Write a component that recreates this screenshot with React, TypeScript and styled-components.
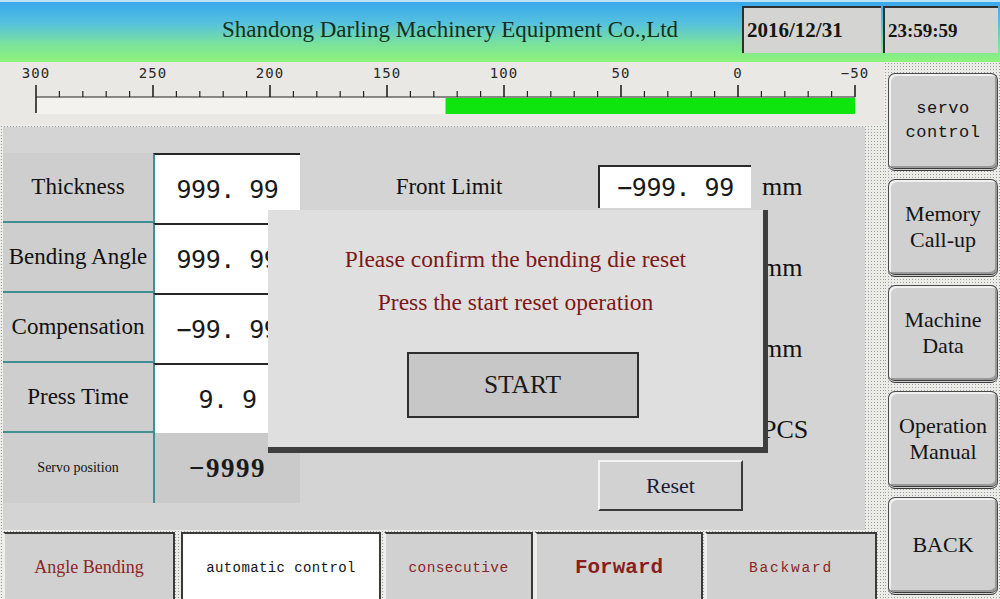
import React from "react";
import styled, { createGlobalStyle } from "styled-components";

const GlobalStyle = createGlobalStyle`
  html, body {
    margin: 0;
    padding: 0;
  }
  body {
    width: 1000px;
    height: 599px;
    overflow: hidden;
    background: #d3d3d3;
    font-family: "Liberation Serif", "Times New Roman", serif;
  }
`;

const SERIF = `"Liberation Serif", "Times New Roman", serif`;
const MONO = `"Liberation Mono", "Courier New", monospace`;
const DIGITS = `"DejaVu Sans Mono", "Liberation Mono", monospace`;

const dotted = `
  background-color: #ebebe8;
  background-image: radial-gradient(#9c9c9c 0.75px, transparent 0.9px);
  background-size: 3px 3px;
`;

const Screen = styled.div`
  width: 1000px;
  height: 599px;
  display: grid;
  grid-template-rows: 62px 537px;
  grid-template-columns: 884px 116px;
  overflow: hidden;
`;

const Header = styled.header`
  grid-column: 1 / 3;
  display: flex;
  align-items: flex-start;
  border-top: 2px solid #bfe3f6;
  background: linear-gradient(to bottom, #3aa8ec 0%, #55c1de 35%, #7ae29c 70%, #8ef47a 100%);
`;

const Title = styled.h1`
  flex: 0 0 742px;
  margin: 0;
  padding: 15px 0 0 222px;
  box-sizing: border-box;
  font-family: ${SERIF};
  font-weight: normal;
  font-size: 23px;
  color: #14301a;
  white-space: nowrap;
`;

const ClockBox = styled.div<{ $w: number; $size: number }>`
  width: ${(p) => p.$w}px;
  height: 47px;
  margin: 4px 2px 0 0;
  box-sizing: border-box;
  border-top: 2px solid #2f2f2f;
  border-left: 2px solid #2f2f2f;
  background: #d4d4d2;
  display: flex;
  align-items: center;
  padding-left: 3px;
  font-family: ${SERIF};
  font-weight: bold;
  font-size: ${(p) => p.$size}px;
  color: #151515;
`;

const LeftColumn = styled.div`
  ${dotted}
  display: flex;
  flex-direction: column;
`;

const RulerWrap = styled.div`
  height: 62px;
  background: #e9e8e4;
`;

const Panel = styled.section`
  position: relative;
  margin: 3px 19px 0 3px;
  height: 403px;
  background: #d4d4d4;
  display: flex;
  align-items: flex-start;
`;

const Table = styled.div`
  margin-top: 26px;
  display: grid;
  grid-template-columns: 150px 147px;
  grid-auto-rows: 70px;
`;

const LabelCell = styled.div<{ $small?: boolean; $last?: boolean }>`
  background: #cecece;
  border-bottom: ${(p) => (p.$last ? "0" : "2px solid #3f9191")};
  display: flex;
  align-items: center;
  justify-content: center;
  font-family: ${SERIF};
  font-size: ${(p) => (p.$small ? 14 : 23)}px;
  color: #111;
  white-space: nowrap;
`;

const ValueCell = styled.div<{ $plain?: boolean }>`
  box-sizing: border-box;
  border-left: 2px solid #3f9191;
  border-top: ${(p) => (p.$plain ? "0" : "2px solid #262626")};
  background: ${(p) => (p.$plain ? "#cacaca" : "#fff")};
  display: flex;
  align-items: center;
  justify-content: center;
  font-family: ${(p) => (p.$plain ? SERIF : DIGITS)};
  font-weight: ${(p) => (p.$plain ? "bold" : "normal")};
  font-size: ${(p) => (p.$plain ? 27 : 25)}px;
  letter-spacing: ${(p) => (p.$plain ? "1.5px" : "-0.5px")};
  color: #1a1a1a;
  white-space: nowrap;
  overflow: hidden;
`;

const Settings = styled.div`
  margin-top: 38px;
  display: flex;
  flex-direction: column;
`;

const SettingRow = styled.div`
  height: 81px;
  display: flex;
  align-items: flex-start;
`;

const SettingLabel = styled.div`
  width: 298px;
  height: 43px;
  display: flex;
  align-items: center;
  justify-content: center;
  font-family: ${SERIF};
  font-size: 23px;
  color: #111;
`;

const SettingBox = styled.div`
  width: 153px;
  height: 43px;
  box-sizing: border-box;
  border-top: 2px solid #2a2a2a;
  border-left: 2px solid #2a2a2a;
  background: #fff;
  display: flex;
  align-items: center;
  justify-content: center;
  font-family: ${DIGITS};
  font-size: 25px;
  letter-spacing: -0.5px;
  color: #1a1a1a;
`;

const Unit = styled.div`
  margin-left: 11px;
  height: 43px;
  display: flex;
  align-items: center;
  font-family: ${SERIF};
  font-size: 26px;
  color: #111;
`;

const ResetButton = styled.button`
  margin: -29px 0 0 298px;
  width: 145px;
  height: 51px;
  box-sizing: border-box;
  background: #d2d2d2;
  border: 2px solid;
  border-color: #f3f3f3 #3a3a3a #3a3a3a #f3f3f3;
  font-family: ${SERIF};
  font-size: 22px;
  color: #1c1c3a;
  padding: 0;
`;

const Dialog = styled.div`
  position: absolute;
  left: 265px;
  top: 83px;
  width: 500px;
  height: 243px;
  box-sizing: border-box;
  background: #dfdfdf;
  border-right: 5px solid #3e3e3e;
  border-bottom: 6px solid #3e3e3e;
  display: flex;
  flex-direction: column;
  align-items: center;
  padding-top: 36px;
`;

const Message = styled.p`
  margin: 0 0 16px;
  font-family: ${SERIF};
  font-size: 23.5px;
  line-height: 27px;
  color: #7c1717;
  white-space: nowrap;
`;

const StartButton = styled.button`
  margin: 20px 0 0 14px;
  width: 232px;
  height: 66px;
  box-sizing: border-box;
  background: #c7c7c7;
  border: 2px solid #2e2e2e;
  font-family: ${SERIF};
  font-size: 25.5px;
  color: #1a1a1a;
  padding: 0;
`;

const TabBar = styled.nav`
  margin-top: 2px;
  height: 67px;
  display: flex;
  padding-left: 3px;
`;

const Tab = styled.button<{
  $w: number;
  $gap: number;
  $active?: boolean;
  $mono?: boolean;
  $size: number;
  $bold?: boolean;
  $spacing?: number;
  $color: string;
}>`
  flex: 0 0 ${(p) => p.$w}px;
  margin-right: ${(p) => p.$gap}px;
  height: 67px;
  box-sizing: border-box;
  padding: 2px 0 0;
  background: ${(p) => (p.$active ? "#ffffff" : "#d1d1d1")};
  border: 2px solid;
  border-bottom: 0;
  border-color: #3a3a3a #3a3a3a transparent ${(p) => (p.$active ? "#3a3a3a" : "#efefef")};
  font-family: ${(p) => (p.$mono ? MONO : SERIF)};
  font-size: ${(p) => p.$size}px;
  font-weight: ${(p) => (p.$bold ? "bold" : "normal")};
  letter-spacing: ${(p) => p.$spacing ?? 0}px;
  color: ${(p) => p.$color};
  white-space: nowrap;
`;

const SideColumn = styled.aside`
  ${dotted}
  display: flex;
  flex-direction: column;
  gap: 8px;
  padding: 11px 2px 0 4px;
`;

const SideButton = styled.button<{ $mono?: boolean }>`
  height: 98px;
  flex: 0 0 98px;
  box-sizing: border-box;
  border-radius: 7px;
  border: 1px solid #4a4a4a;
  border-bottom: 3px double #3a3a3a;
  background: #d0d0d0;
  box-shadow: inset 2px 2px 0 #f1f1f1, inset -2px -2px 0 #9a9a9a;
  padding: 0;
  font-family: ${(p) => (p.$mono ? MONO : SERIF)};
  font-size: ${(p) => (p.$mono ? 17 : 22)}px;
  letter-spacing: ${(p) => (p.$mono ? "0.5px" : "0")};
  line-height: ${(p) => (p.$mono ? 24 : 26)}px;
  color: #141414;
`;

const Ruler = () => {
  const x0 = 36;
  const step = 23.4;
  const ticks = Array.from({ length: 36 }, (_, i) => i);
  const labels = [300, 250, 200, 150, 100, 50, 0, -50];
  const value = 125;
  const toX = (v: number) => x0 + ((300 - v) / 10) * step;
  return (
    <svg width="884" height="62" viewBox="0 0 884 62">
      {labels.map((v) => (
        <text
          key={v}
          x={toX(v)}
          y={16}
          textAnchor="middle"
          fontFamily={DIGITS}
          fontSize="14"
          letterSpacing="1"
          fill="#2a2a2a"
        >
          {v < 0 ? `\u2212${-v}` : v}
        </text>
      ))}
      <rect x={x0} y={35} width={toX(-50) - x0} height={17} fill="#f3f2ef" />
      <rect x={toX(value)} y={36} width={toX(-50) - toX(value)} height={16} fill="#0ee40e" />
      <line x1={x0} y1={35} x2={toX(-50)} y2={35} stroke="#222" strokeWidth="1.2" />
      {ticks.map((i) => {
        const x = x0 + i * step;
        const major = i % 5 === 0;
        return (
          <line
            key={i}
            x1={x}
            x2={x}
            y1={major ? 23 : 29}
            y2={i === 0 ? 51 : 35}
            stroke="#222"
            strokeWidth={major ? 1.6 : 1.2}
          />
        );
      })}
    </svg>
  );
};

const rows = [
  { label: "Thickness", value: "999. 99" },
  { label: "Bending Angle", value: "999. 99" },
  { label: "Compensation", value: "\u221299. 99" },
  { label: "Press Time", value: "9. 9" },
];

// rows 2-4 sit under the dialog; only their units show past its edge
const settings = [
  { label: "Front Limit", value: "\u2212999. 99", unit: "mm" },
  { label: "", value: "", unit: "mm" },
  { label: "", value: "", unit: "mm" },
  { label: "", value: "", unit: "PCS" },
];

const App = () => {
  return (
    <>
      <GlobalStyle />
      <Screen>
        <Header>
          <Title>Shandong Darling Machinery Equipment Co.,Ltd</Title>
          <ClockBox $w={140} $size={21}>2016/12/31</ClockBox>
          <ClockBox $w={116} $size={19}>23:59:59</ClockBox>
        </Header>

        <LeftColumn>
          <RulerWrap>
            <Ruler />
          </RulerWrap>

          <Panel>
            <Table>
              {rows.map((r) => (
                <React.Fragment key={r.label}>
                  <LabelCell>{r.label}</LabelCell>
                  <ValueCell>{r.value}</ValueCell>
                </React.Fragment>
              ))}
              <LabelCell $small $last>Servo position</LabelCell>
              <ValueCell $plain>{"\u22129999"}</ValueCell>
            </Table>

            <Settings>
              {settings.map((s, i) => (
                <SettingRow key={i}>
                  <SettingLabel>{s.label}</SettingLabel>
                  <SettingBox>{s.value}</SettingBox>
                  <Unit>{s.unit}</Unit>
                </SettingRow>
              ))}
              <ResetButton>Reset</ResetButton>
            </Settings>

            <Dialog>
              <Message>Please confirm the bending die reset</Message>
              <Message>Press the start reset operation</Message>
              <StartButton>START</StartButton>
            </Dialog>
          </Panel>

          <TabBar>
            <Tab $w={172} $gap={6} $size={18} $color="#8a2626">Angle Bending</Tab>
            <Tab $w={200} $gap={3} $active $mono $size={14} $spacing={0.4} $color="#151515">
              automatic control
            </Tab>
            <Tab $w={149} $gap={2} $mono $size={14.5} $spacing={0.4} $color="#8a2626">
              consecutive
            </Tab>
            <Tab $w={168} $gap={2} $mono $bold $size={21} $color="#8a1e1e">Forward</Tab>
            <Tab $w={172} $gap={0} $mono $size={14.5} $spacing={1.8} $color="#8a2626">Backward</Tab>
          </TabBar>
        </LeftColumn>

        <SideColumn>
          <SideButton $mono>
            servo
            <br />
            control
          </SideButton>
          <SideButton>
            Memory
            <br />
            Call-up
          </SideButton>
          <SideButton>
            Machine
            <br />
            Data
          </SideButton>
          <SideButton>
            Operation
            <br />
            Manual
          </SideButton>
          <SideButton>BACK</SideButton>
        </SideColumn>
      </Screen>
    </>
  );
};

export default App;
